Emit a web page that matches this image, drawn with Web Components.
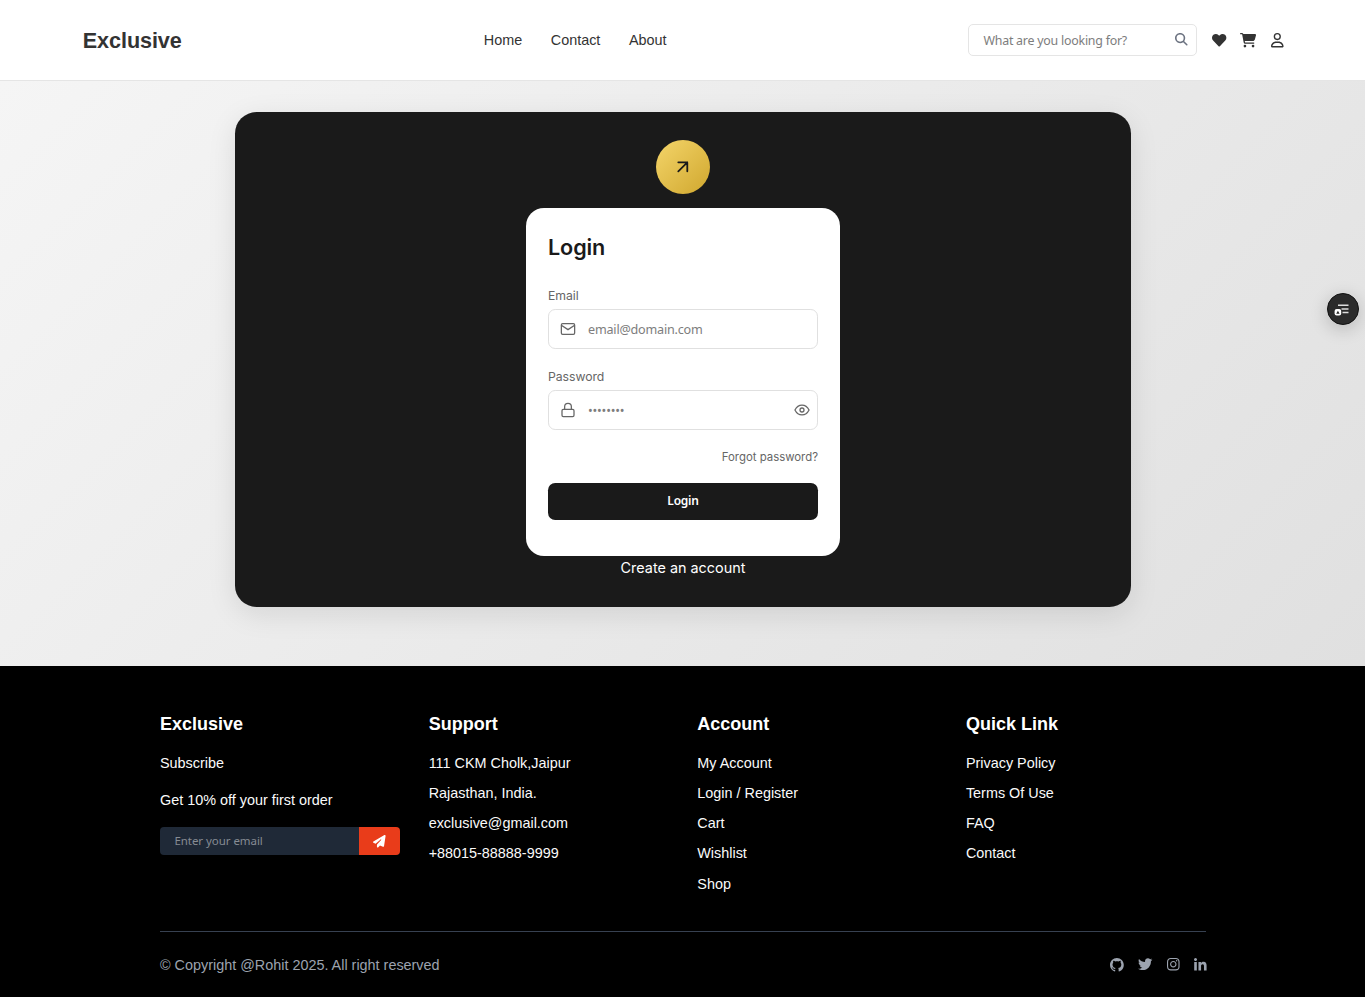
<!DOCTYPE html>
<html lang="en">
<head>
<meta charset="utf-8">
<title>Exclusive</title>
<style>
html,body{margin:0;padding:0}
body{font-family:"Liberation Sans",Arial,sans-serif;font-size:14.4px;line-height:21.6px;background:#fff;color:#333;overflow:hidden}
</style>
</head>
<body>
<shop-app></shop-app>
<script>
const define = (name, html) => {
  const t = document.createElement('template');
  t.innerHTML = html;
  customElements.define(name, class extends HTMLElement {
    constructor() {
      super();
      this.attachShadow({mode: 'open'}).appendChild(t.content.cloneNode(true));
    }
  });
};

const ICONS = {
  heart: ['0 0 512 512', 'M462.3 62.6C407.5 15.9 326 24.3 275.7 76.2L256 96.5l-19.7-20.3C186.1 24.3 104.5 15.9 49.7 62.6c-62.8 53.6-66.1 149.8-9.9 207.9l193.5 199.8c12.5 12.9 32.8 12.9 45.3 0l193.5-199.8c56.3-58.1 53-154.3-9.8-207.9z'],
  cart: ['0 0 576 512', 'M0 24C0 10.7 10.7 0 24 0H69.5c22 0 41.5 12.8 50.6 32h411c26.3 0 45.5 25 38.6 50.4l-41 152.3c-8.5 31.4-37 53.3-69.5 53.3H170.7l5.4 28.5c2.2 11.3 12.1 19.5 23.6 19.5H488c13.3 0 24 10.7 24 24s-10.7 24-24 24H199.7c-34.6 0-64.3-24.6-70.7-58.5L77.4 54.5c-.7-3.8-4-6.5-7.9-6.5H24C10.7 48 0 37.3 0 24zM128 464a48 48 0 1 1 96 0 48 48 0 1 1 -96 0zm336-48a48 48 0 1 1 0 96 48 48 0 1 1 0-96z'],
  user: ['0 0 448 512', 'M304 128a80 80 0 1 0 -160 0 80 80 0 1 0 160 0zM96 128a128 128 0 1 1 256 0A128 128 0 1 1 96 128zM49.3 464H398.7c-8.9-63.3-63.3-112-129-112H178.3c-65.7 0-120.1 48.7-129 112zM0 482.3C0 383.8 79.8 304 178.3 304h91.4C368.2 304 448 383.8 448 482.3c0 16.4-13.3 29.7-29.7 29.7H29.7C13.3 512 0 498.7 0 482.3z'],
  search: ['0 0 512 512', 'M416 208c0 45.9-14.9 88.3-40 122.7L502.6 457.4c12.5 12.5 12.5 32.8 0 45.3s-32.8 12.5-45.3 0L330.7 376c-34.4 25.2-76.8 40-122.7 40C93.1 416 0 322.9 0 208S93.1 0 208 0S416 93.1 416 208zM208 352a144 144 0 1 0 0-288 144 144 0 1 0 0 288z'],
  plane: ['0 0 512 512', 'M498.1 5.6c10.1 7 15.4 19.1 13.5 31.2l-64 416c-1.5 9.7-7.4 18.2-16 23s-18.9 5.4-28 1.6L284 427.7l-68.5 74.1c-8.9 9.7-22.9 12.9-35.2 8.1S160 493.2 160 480V396.4c0-4 1.5-7.8 4.2-10.7L331.8 202.8c5.8-6.3 5.6-16-.4-22s-15.7-6.4-22-.7L106 360.8 17.7 316.6C7.1 311.3 .3 300.7 0 288.9s5.9-22.8 16.1-28.7l448-256c10.7-6.1 23.9-5.5 34 1.4z'],
  github: ['0 0 16 16', 'M8 0C3.58 0 0 3.58 0 8c0 3.54 2.29 6.53 5.47 7.59.4.07.55-.17.55-.38 0-.19-.01-.82-.01-1.49-2.01.37-2.53-.49-2.69-.94-.09-.23-.48-.94-.82-1.13-.28-.15-.68-.52-.01-.53.63-.01 1.08.58 1.23.82.72 1.21 1.87.87 2.33.66.07-.52.28-.87.51-1.07-1.78-.2-3.64-.89-3.64-3.95 0-.87.31-1.59.82-2.15-.08-.2-.36-1.02.08-2.12 0 0 .67-.21 2.2.82.64-.18 1.32-.27 2-.27s1.36.09 2 .27c1.53-1.04 2.2-.82 2.2-.82.44 1.1.16 1.92.08 2.12.51.56.82 1.27.82 2.15 0 3.07-1.87 3.75-3.65 3.95.29.25.54.73.54 1.48 0 1.07-.01 1.93-.01 2.2 0 .21.15.46.55.38A8.01 8.01 0 0 0 16 8c0-4.42-3.58-8-8-8z'],
  twitter: ['0 0 512 512', 'M459.37 151.716c.325 4.548.325 9.097.325 13.645 0 138.72-105.583 298.558-298.558 298.558-59.452 0-114.68-17.219-161.137-47.106 8.447.974 16.568 1.299 25.34 1.299 49.055 0 94.213-16.568 130.274-44.832-46.132-.975-84.792-31.188-98.112-72.772 6.498.974 12.995 1.624 19.818 1.624 9.421 0 18.843-1.3 27.614-3.573-48.081-9.747-84.143-51.98-84.143-102.985v-1.299c13.969 7.797 30.214 12.67 47.431 13.319-28.264-18.843-46.781-51.005-46.781-87.391 0-19.492 5.197-37.36 14.294-52.954 51.655 63.675 129.3 105.258 216.365 109.807-1.624-7.797-2.599-15.918-2.599-24.04 0-57.828 46.782-104.934 104.934-104.934 30.213 0 57.502 12.67 76.67 33.137 23.715-4.548 46.456-13.32 66.599-25.34-7.798 24.366-24.366 44.833-46.132 57.827 21.117-2.273 41.584-8.122 60.426-16.243-14.292 20.791-32.161 39.308-52.628 54.253z'],
  instagram: ['0 0 448 512', 'M224.1 141c-63.6 0-114.9 51.3-114.9 114.9s51.3 114.9 114.9 114.9S339 319.5 339 255.9 287.7 141 224.1 141zm0 189.6c-41.1 0-74.7-33.5-74.7-74.7s33.5-74.7 74.7-74.7 74.7 33.5 74.7 74.7-33.6 74.7-74.7 74.7zm146.4-194.3c0 14.9-12 26.8-26.8 26.8-14.9 0-26.8-12-26.8-26.8s12-26.8 26.8-26.8 26.8 12 26.8 26.8zm76.1 27.2c-1.7-35.9-9.9-67.7-36.2-93.9-26.2-26.2-58-34.4-93.9-36.2-37-2.1-147.9-2.1-184.9 0-35.8 1.7-67.6 9.9-93.9 36.1s-34.4 58-36.2 93.9c-2.1 37-2.1 147.9 0 184.9 1.7 35.9 9.9 67.7 36.2 93.9s58 34.4 93.9 36.2c37 2.1 147.9 2.1 184.9 0 35.9-1.7 67.7-9.9 93.9-36.2 26.2-26.2 34.4-58 36.2-93.9 2.1-37 2.1-147.8 0-184.8zM398.8 388c-7.8 19.6-22.9 34.7-42.6 42.6-29.5 11.7-99.5 9-132.1 9s-102.7 2.6-132.1-9c-19.6-7.8-34.7-22.9-42.6-42.6-11.7-29.5-9-99.5-9-132.1s-2.6-102.7 9-132.1c7.8-19.6 22.9-34.7 42.6-42.6 29.5-11.7 99.5-9 132.1-9s102.7-2.6 132.1 9c19.6 7.8 34.7 22.9 42.6 42.6 11.7 29.5 9 99.5 9 132.1s2.7 102.7-9 132.1z'],
  linkedin: ['0 -32 448 512', 'M100.28 448H7.4V148.9h92.88zM53.79 108.1C24.09 108.1 0 83.5 0 53.8a53.79 53.79 0 0 1 107.58 0c0 29.7-24.1 54.3-53.79 54.3zM447.9 448h-92.68V302.4c0-34.7-.7-79.2-48.29-79.2-48.29 0-55.69 37.7-55.69 76.7V448h-92.78V148.9h89.08v40.8h1.3c12.4-23.5 42.69-48.3 87.88-48.3 94 0 111.28 61.9 111.28 142.3V448z']
};

/* Solid glyph: <solid-icon name="..." size="height in px"> */
customElements.define('solid-icon', class extends HTMLElement {
  connectedCallback() {
    if (this.shadowRoot) return;
    const [box, d] = ICONS[this.getAttribute('name')];
    const h = parseFloat(this.getAttribute('size') || '14.4');
    const [, , vw, vh] = box.split(' ').map(Number);
    this.attachShadow({mode: 'open'}).innerHTML =
      `<style>:host{display:block;flex:none}svg{display:block;fill:currentColor;overflow:visible}</style>
       <svg width="${h * vw / vh}" height="${h}" viewBox="${box}"><path d="${d}"/></svg>`;
  }
});

define('site-header', `
<style>
:host{display:block;background:#fff;border-bottom:1px solid #e5e5e5}
header{display:flex;justify-content:space-between;align-items:center;height:80px;padding:0 81.6px 0 82.8px}
.logo{font-size:21.6px;line-height:28.8px;font-weight:700;color:#333;padding-top:3px;letter-spacing:-.08px}
nav{display:flex;gap:28.6px;margin-left:.6px;padding-top:2px}
a{color:#333;text-decoration:none}
.right{display:flex;align-items:center;gap:14.4px}
.search{box-sizing:border-box;display:flex;align-items:center;width:229px;height:32px;border:1px solid #e5e5e5;border-radius:5px;padding:0 8.4px 0 14.4px;color:#6b7280}
.search solid-icon{margin-bottom:1px}
input{flex:1;min-width:0;border:0;outline:0;padding:0;margin:0;background:none;font:12.4px/18px "Noto Sans",sans-serif;letter-spacing:-.23px;height:20px}
input::placeholder{color:#7d7d7d;opacity:1}
.icons{display:flex;align-items:center;gap:14.4px;color:#333}
.icons solid-icon:first-child{margin:0 -.6px 0 .6px}
</style>
<header>
  <div class="logo">Exclusive</div>
  <nav><a>Home</a><a>Contact</a><a>About</a></nav>
  <div class="right">
    <div class="search"><input placeholder="What are you looking for?"><solid-icon name="search" size="12.6"></solid-icon></div>
    <div class="icons"><solid-icon name="heart"></solid-icon><solid-icon name="cart"></solid-icon><solid-icon name="user"></solid-icon></div>
  </div>
</header>`);

/* Labelled input row with a leading icon and an optional trailing one */
customElements.define('form-field', class extends HTMLElement {
  connectedCallback() {
    if (this.shadowRoot) return;
    this.attachShadow({mode: 'open'}).innerHTML = `
<style>
:host{display:block}
label{display:block;font:12.24px/18px Inter,sans-serif;letter-spacing:-.05px;color:#666;margin-bottom:4px}
.box{box-sizing:border-box;display:flex;align-items:center;height:40px;border:1px solid #e0e0e0;border-radius:7.2px;padding:0 7px 0 11px;color:#666}
::slotted(svg){display:block;flex:none}
input{flex:1;min-width:0;border:0;outline:0;padding:0;margin:0 0 0 12px;background:none;font:12.6px/20px "Noto Sans",sans-serif;letter-spacing:-.2px;height:22px}
input::placeholder{color:#7d7d7d;opacity:1}
</style>
<label>${this.getAttribute('label')}</label>
<div class="box"><slot name="lead"></slot><input type="text" placeholder="${this.getAttribute('placeholder')}"><slot name="trail"></slot></div>`;
  }
});

define('login-panel', `
<style>
:host{display:block;box-sizing:border-box;width:896px;height:495px;background:#1a1a1a;border-radius:21.6px;box-shadow:0 7px 29px rgba(0,0,0,.1);padding-top:28px}
.badge{width:54px;height:54px;border-radius:50%;margin:0 auto 14px;background:linear-gradient(135deg,#f4d56a,#d0a72e);display:flex;align-items:center;justify-content:center}
.badge svg{margin-right:1px}
.card{box-sizing:border-box;width:314px;height:348px;margin:0 auto;background:#fff;border-radius:18px;padding:22px}
h1{margin:0;font:600 21.6px/34px Inter,sans-serif;letter-spacing:-.1px;color:#1a1a1a}
form-field{margin-top:23px}
form-field + form-field{margin-top:19px}
.forgot{margin-top:18px;text-align:right;font:11.4px/18px Inter,sans-serif;color:#666}
button{display:block;width:100%;height:37px;margin:17px 0 0;padding:0 0 2px;border:0;border-radius:7.2px;background:#1a1a1a;color:#fff;font:600 12px/18px "Noto Sans",sans-serif;letter-spacing:-.25px}
.create{text-align:center;color:#fff;font:14.4px/22px Inter,sans-serif;margin-top:1px}
</style>
<div class="badge"><svg width="21.6" height="21.6" viewBox="0 0 24 24" fill="none" stroke="#1a1a1a" stroke-width="2" stroke-linecap="round" stroke-linejoin="round"><path d="M7 17 17 7M7 7h10v10"/></svg></div>
<div class="card">
  <h1>Login</h1>
  <form-field label="Email" placeholder="email@domain.com">
    <svg slot="lead" width="16" height="16" viewBox="0 0 20 20" fill="none" stroke="currentColor" stroke-width="1.6"><rect x="1.7" y="3.3" width="16.6" height="13.4" rx="1.6"/><path d="M1.7 5.3 10 10.8l8.3-5.5"/></svg>
  </form-field>
  <form-field label="Password" placeholder="••••••••">
    <svg slot="lead" width="16" height="16" viewBox="0 0 20 20" fill="none" stroke="currentColor" stroke-width="1.6"><rect x="2.5" y="9.2" width="15" height="9.1" rx="1.6"/><path d="M5.8 9V5.8a4.2 4.2 0 0 1 8.4 0V9"/></svg>
    <svg slot="trail" width="16" height="16" viewBox="0 0 20 20" fill="none" stroke="currentColor" stroke-width="1.6"><path d="M1.2 10S4.2 3.9 10 3.9 18.8 10 18.8 10 15.8 16.1 10 16.1 1.2 10 1.2 10Z"/><circle cx="10" cy="10" r="2.5"/></svg>
  </form-field>
  <div class="forgot">Forgot password?</div>
  <button type="button">Login</button>
</div>
<div class="create">Create an account</div>`);

define('footer-column', `
<style>
:host{display:block}
h2{margin:0 0 15.5px;font-size:18px;line-height:25.2px;font-weight:700;color:#fff}
.items{display:flex;flex-direction:column;gap:8.64px}
</style>
<h2><slot name="title"></slot></h2><div class="items"><slot></slot></div>`);

define('site-footer', `
<style>
:host{display:block;box-sizing:border-box;height:331px;background:#000;color:#fafafa;padding:46px 159px 0 160px}
.cols{display:grid;grid-template-columns:repeat(4,240px);gap:28.65px;height:219px}
.offer{margin-top:7px}
.mail{display:flex;height:28px;margin-top:7px;border-radius:4px;overflow:hidden}
.mail input{flex:1;min-width:0;border:0;outline:0;margin:0;background:#1f2937;padding:0 14.4px;font:11.5px/16px "Noto Sans",sans-serif;letter-spacing:-.05px}
.mail input::placeholder{color:#868b93;opacity:1}
.send{width:41px;background:#e93c1a;color:#fff;display:flex;align-items:center;justify-content:center}
.bottom{display:flex;justify-content:space-between;align-items:center;border-top:1px solid #374151;color:#9ca3af;height:66px;width:1046.4px}
.copy{padding-top:2px}
.social{display:flex;gap:14.4px;align-items:center;margin-bottom:1px}
</style>
<div class="cols">
  <footer-column><span slot="title">Exclusive</span><span>Subscribe</span><span class="offer">Get 10% off your first order</span>
    <div class="mail"><input placeholder="Enter your email"><div class="send"><solid-icon name="plane" size="12.6"></solid-icon></div></div></footer-column>
  <footer-column><span slot="title">Support</span><span>111 CKM Cholk,Jaipur</span><span>Rajasthan, India.</span><span>exclusive@gmail.com</span><span>+88015-88888-9999</span></footer-column>
  <footer-column><span slot="title">Account</span><span>My Account</span><span>Login / Register</span><span>Cart</span><span>Wishlist</span><span>Shop</span></footer-column>
  <footer-column><span slot="title">Quick Link</span><span>Privacy Policy</span><span>Terms Of Use</span><span>FAQ</span><span>Contact</span></footer-column>
</div>
<div class="bottom"><span class="copy">© Copyright @Rohit 2025. All right reserved</span>
  <div class="social"><solid-icon name="github" size="13.8"></solid-icon><solid-icon name="twitter"></solid-icon><solid-icon name="instagram"></solid-icon><solid-icon name="linkedin"></solid-icon></div></div>`);

define('reader-button', `
<style>
:host{position:fixed;left:1327px;top:293px;width:32px;height:32px;border-radius:50%;box-sizing:border-box;background:#2b2b2b;border:1px solid #111;box-shadow:0 4px 18px rgba(0,0,0,.2)}
svg{display:block}
</style>
<svg width="30" height="30" viewBox="1 1 30 30" fill="none"><path d="M11 12.3h10.5M14.5 16h7M15.5 19.6h6" stroke="#ddd" stroke-width="1.5"/><rect x="7.6" y="16" width="6.6" height="6.4" rx="2" fill="#fff"/><path d="M9.2 20.8 10.9 17.8l1.7 3z" fill="#222"/></svg>`);

define('shop-app', `
<style>
:host{display:block}
main{box-sizing:border-box;height:585px;padding-top:31px;background:linear-gradient(135deg,#f5f5f5,#e0e0e0)}
login-panel{margin:0 auto 0 235px}
</style>
<site-header></site-header>
<main><login-panel></login-panel></main>
<site-footer></site-footer>
<reader-button></reader-button>`);
</script>
</body>
</html>
